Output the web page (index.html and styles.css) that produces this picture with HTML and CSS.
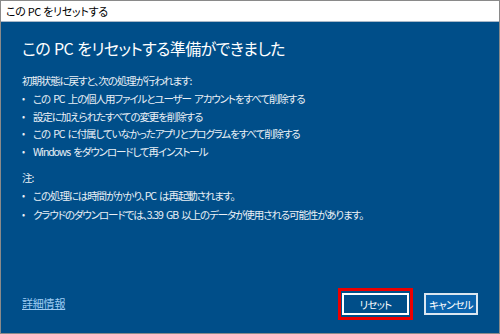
FILE: index.html
```html
<!DOCTYPE html>
<html lang="ja">
<head>
    <meta charset="UTF-8">
    <title>この PC をリセットする</title>
    <link rel="stylesheet" href="styles.css">
</head>
<body>
<div class="dialog">
    <div class="titlebar">この PC をリセットする</div>

    <div class="content">
        <h1>この PC をリセットする準備ができました</h1>

        <p>初期状態に戻すと、次の処理が行われます:</p>
        <ul class="steps">
            <li>この PC 上の個人用ファイルとユーザー アカウントをすべて削除する</li>
            <li>設定に加えられたすべての変更を削除する</li>
            <li>この PC に付属していなかったアプリとプログラムをすべて削除する</li>
            <li>Windows をダウンロードして再インストール</li>
        </ul>

        <p class="note">注:</p>
        <ul class="steps notes">
            <li>この処理には時間がかかり、PC は再起動されます。</li>
            <li>クラウドのダウンロードでは、3.39 GB 以上のデータが使用される可能性があります。</li>
        </ul>

        <div class="footer">
            <a href="#" class="more">詳細情報</a>
            <div class="buttons">
                <span class="highlight"><button type="button" class="btn btn-reset">リセット</button></span>
                <button type="button" class="btn btn-cancel">キャンセル</button>
            </div>
        </div>
    </div>
</div>
</body>
</html>
```

FILE: styles.css
```css
* {
    margin: 0;
    padding: 0;
    box-sizing: border-box;
    font-family: "Noto Sans CJK JP", sans-serif;
    font-feature-settings: "palt";
}

body {
    width: 500px;
    height: 334px;
    overflow: hidden;
}

.dialog {
    width: 500px;
    height: 334px;
    border: 1px solid #8a8a8a;
    display: flex;
    flex-direction: column;
    background: #004e89;
}

.titlebar {
    height: 21px;
    background: #fff;
    border-bottom: 1px solid #a9b8c8;
    color: #000;
    font-size: 11px;
    letter-spacing: -0.3px;
    line-height: 20px;
    padding-left: 5px;
}

.content {
    flex: 1;
    display: flex;
    flex-direction: column;
    padding: 14px 21px 13px 21px;
    color: #eaf0f6;
    font-size: 10.5px;
    letter-spacing: -1.1px;
    word-spacing: 2px;
    line-height: 17.8px;
}

h1 {
    font-size: 16px;
    font-weight: normal;
    letter-spacing: -0.6px;
    word-spacing: 1px;
    line-height: 24px;
    color: #fff;
    margin-bottom: 12px;
}

.steps {
    list-style: none;
}

.steps li {
    position: relative;
    padding-left: 11px;
}

.steps li::before {
    content: "•";
    position: absolute;
    left: 0;
    font-size: 9px;
}

.note {
    margin-top: 8px;
}

.notes li {
    line-height: 18.8px;
}

.footer {
    margin-top: auto;
    display: flex;
    justify-content: space-between;
    align-items: center;
}

.more {
    color: #9ecbf3;
    text-decoration: underline;
    font-size: 11px;
    letter-spacing: -0.2px;
}

.buttons {
    display: flex;
    align-items: center;
    gap: 11px;
}

.highlight {
    display: block;
    border: 3px solid #ec0000;
    padding: 2px 1px;
}

.btn {
    display: block;
    height: 22px;
    border: 2px solid #fff;
    color: #fff;
    font-size: 10.5px;
    letter-spacing: -0.8px;
    font-family: "Noto Sans CJK JP", sans-serif;
    background: #004e89;
}

.btn-reset {
    width: 67px;
}

.btn-cancel {
    width: 54px;
    background: #0a63ad;
    border-color: #dbe6f0;
}
```
